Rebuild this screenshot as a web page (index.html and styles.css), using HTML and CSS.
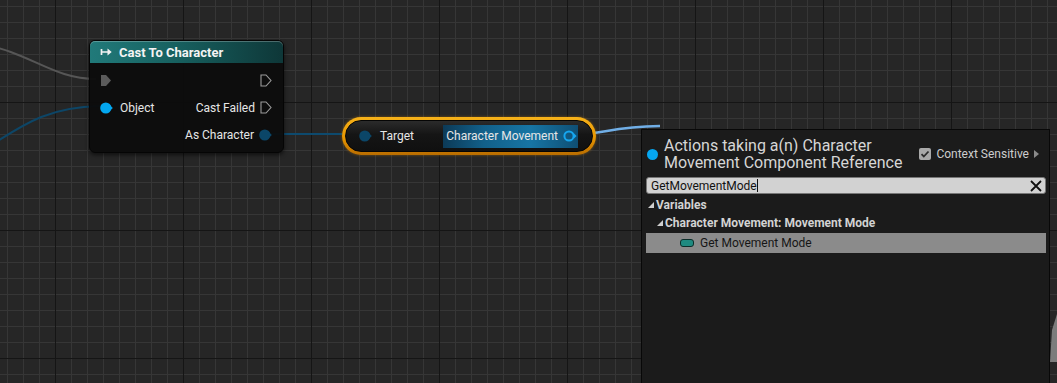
FILE: index.html
```html
<!DOCTYPE html>
<html lang="en">

<head>
    <meta charset="UTF-8">
    <meta name="viewport" content="width=device-width, initial-scale=1.0">
    <title>Blueprint Graph</title>
    <link rel="stylesheet" href="styles.css">
</head>

<body>
    <div class="graph">
        <!-- wires sit under the nodes -->
        <svg class="wires" width="1057" height="383" viewBox="0 0 1057 383">
            <path d="M-20 44 C 30 52, 52 79, 96 79" stroke="#565656" stroke-width="2" fill="none" />
            <path d="M-10 146 C 28 121, 52 107, 100 106" stroke="#0d4667" stroke-width="2" fill="none" />
            <path d="M268 134 L 360 134" stroke="#0d4a6e" stroke-width="2" fill="none" />
            <path d="M578 134 C 602 134, 612 127, 660 126" stroke="#70aee6" stroke-width="2.5" fill="none" />
            <path d="M1057 314 L 1052 330 L 1050 362 L 1057 362 Z" fill="#7c7c7c" />
        </svg>

        <div class="node cast-node">
            <div class="node-header">
                <svg class="cast-icon" width="13" height="12" viewBox="0 0 13 12">
                    <path d="M1.5 3v6 M1.5 6h7" stroke="#f2f2f2" stroke-width="1.7" fill="none" />
                    <path d="M7.5 2.6l4.2 3.4-4.2 3.4z" fill="#f2f2f2" />
                </svg>
                <span>Cast To Character</span>
            </div>
            <div class="node-body">
                <div class="pin pin-in">
                    <svg width="12" height="13" viewBox="0 0 12 13"><path d="M1 1h5l5 5.5-5 5.5H1z" fill="#5b5b5b" /></svg>
                </div>
                <div class="pin pin-out">
                    <svg width="12" height="13" viewBox="0 0 12 13"><path d="M1 1h5l5 5.5-5 5.5H1z" fill="none" stroke="#9c9c9c" stroke-width="1.1" /></svg>
                </div>
                <div class="pin pin-in">
                    <svg width="13" height="12" viewBox="0 0 13 12"><circle cx="5.8" cy="6" r="5.6" fill="#03a7f0" /><path d="M10 3.2l2.8 2.8-2.8 2.8z" fill="#03a7f0" /></svg>
                    <span>Object</span>
                </div>
                <div class="pin pin-out">
                    <span>Cast Failed</span>
                    <svg width="12" height="13" viewBox="0 0 12 13"><path d="M1 1h5l5 5.5-5 5.5H1z" fill="none" stroke="#9c9c9c" stroke-width="1.1" /></svg>
                </div>
                <div class="pin pin-in"></div>
                <div class="pin pin-out">
                    <span>As Character</span>
                    <svg width="13" height="12" viewBox="0 0 13 12"><circle cx="5.8" cy="6" r="5.6" fill="#0b4668" /><path d="M10 3.2l2.8 2.8-2.8 2.8z" fill="#0b4668" /></svg>
                </div>
            </div>
        </div>

        <div class="node getter-node">
            <div class="getter-inner">
                <svg width="13" height="12" viewBox="0 0 13 12"><circle cx="5.8" cy="6" r="5.6" fill="#0b4668" /><path d="M10 3.2l2.8 2.8-2.8 2.8z" fill="#0b4668" /></svg>
                <span class="getter-target">Target</span>
                <div class="getter-out">
                    <span>Character Movement</span>
                    <svg width="14" height="12" viewBox="0 0 14 12"><circle cx="6" cy="6" r="4.6" fill="none" stroke="#16a6ef" stroke-width="2" /><path d="M11 3.4l2.6 2.6-2.6 2.6z" fill="#16a6ef" /></svg>
                </div>
            </div>
        </div>

        <div class="menu">
            <div class="menu-header">
                <span class="type-dot"></span>
                <div class="menu-title">Actions taking a(n) Character<br>Movement Component Reference</div>
                <div class="context">
                    <span class="checkbox">
                        <svg width="10" height="10" viewBox="0 0 10 10"><path d="M1.5 5.2l2.3 2.3 4.7-5" stroke="#2b2b2b" stroke-width="1.8" fill="none" /></svg>
                    </span>
                    <span>Context Sensitive</span>
                    <span class="context-arrow"></span>
                </div>
            </div>
            <div class="search">
                <span class="search-text">GetMovementMode</span><span class="caret"></span>
                <svg class="clear" width="12" height="12" viewBox="0 0 12 12"><path d="M1 1l10 10 M11 1L1 11" stroke="#111" stroke-width="1.8" /></svg>
            </div>
            <div class="tree">
                <div class="tree-row category"><span class="tri"></span>Variables</div>
                <div class="tree-row category sub"><span class="tri"></span>Character Movement: Movement Mode</div>
                <div class="tree-row action selected"><span class="var-icon"></span>Get Movement Mode</div>
            </div>
        </div>
    </div>
</body>

</html>
```

FILE: styles.css
```css
html,
body {
    margin: 0;
    height: 100%;
}

body {
    font-family: Roboto, "Liberation Sans", sans-serif;
    font-size: 12px;
    color: #e6e6e6;
    overflow: hidden;
}

/* grid: minor lines every 16px, major every 128px */
.graph {
    position: relative;
    width: 100vw;
    height: 100vh;
    overflow: hidden;
    background-color: #262626;
    background-image:
        linear-gradient(90deg, #151515 1px, transparent 1px),
        linear-gradient(180deg, #151515 1px, transparent 1px),
        linear-gradient(90deg, #363636 1px, transparent 1px),
        linear-gradient(180deg, #363636 1px, transparent 1px);
    background-size: 128px 128px, 128px 128px, 16px 16px, 16px 16px;
    background-position: 55px 0, 0 102px, 7px 0, 0 6px;
}

.wires {
    position: absolute;
    top: 0;
    left: 0;
}

.node {
    position: absolute;
}

/* Cast To Character */
.cast-node {
    left: 89px;
    top: 40px;
    width: 195px;
    border-radius: 6px;
    background: rgba(12, 12, 12, 0.95);
    border: 1px solid #050505;
    box-shadow: 0 2px 4px rgba(0, 0, 0, 0.6);
    box-sizing: border-box;
}

.node-header {
    display: flex;
    align-items: center;
    gap: 6px;
    height: 22px;
    padding: 0 10px;
    border-radius: 5px 5px 0 0;
    background: linear-gradient(90deg, #217a7a 0%, #17605f 45%, #0e3738 100%);
    box-shadow: inset 0 1px 0 rgba(255, 255, 255, 0.25);
    font-size: 13px;
    font-weight: 700;
    color: #f4f4f4;
}

.node-body {
    display: grid;
    grid-template-columns: 1fr auto;
    grid-auto-rows: 27px;
    padding: 4px 11px 4px 10px;
}

.pin {
    display: flex;
    align-items: center;
    gap: 7px;
}

.pin-out {
    justify-content: flex-end;
    gap: 5px;
}

.pin svg {
    display: block;
}

/* Character Movement getter */
.getter-node {
    left: 342px;
    top: 117px;
    width: 254px;
    height: 38px;
    box-sizing: border-box;
    padding: 3px;
    border-radius: 19px;
    background: linear-gradient(180deg, #f7b21a, #e79600 55%, #b86c00);
    box-shadow: 0 0 3px rgba(255, 160, 0, 0.4);
}

.getter-inner {
    display: flex;
    align-items: center;
    height: 100%;
    box-sizing: border-box;
    padding: 0 0 0 13px;
    border: 1px solid #050505;
    border-radius: 16px;
    background: linear-gradient(180deg, #2b2b2b, #151515 45%, #101010);
}

.getter-target {
    margin-left: 8px;
}

.getter-out {
    display: flex;
    align-items: center;
    gap: 5px;
    margin-left: auto;
    margin-right: 14px;
    height: 23px;
    padding: 0 1px 0 3px;
    background: linear-gradient(90deg, #0c3a57 0%, #12608a 30%, #1775a4 65%, #0f4f74 100%);
}

/* action menu */
.menu {
    position: absolute;
    left: 641px;
    top: 129px;
    width: 409px;
    height: 260px;
    box-sizing: border-box;
    background: #1b1b1b;
    border: 1px solid #080808;
    padding: 2px 4px 0 3px;
}

.menu-header {
    display: flex;
    align-items: center;
    height: 44px;
}

.type-dot {
    width: 11px;
    height: 11px;
    border-radius: 50%;
    background: #05a6f0;
    margin: 0 6px 0 2px;
    flex: none;
}

.menu-title {
    font-size: 16px;
    line-height: 17px;
    color: #d6d6d6;
}

.context {
    display: flex;
    align-items: center;
    gap: 5px;
    margin-left: auto;
    margin-right: 6px;
    color: #cdcdcd;
}

.checkbox {
    display: flex;
    align-items: center;
    justify-content: center;
    width: 12px;
    height: 12px;
    border-radius: 2px;
    background: #a9a9a9;
}

.context-arrow {
    width: 0;
    height: 0;
    border-left: 5px solid #8a8a8a;
    border-top: 4px solid transparent;
    border-bottom: 4px solid transparent;
}

.search {
    display: flex;
    align-items: center;
    height: 17px;
    margin: 1px 0 0 1px;
    width: 400px;
    box-sizing: border-box;
    padding: 0 3px 0 4px;
    background: #d2d2d2;
    border: 1px solid #777;
    border-radius: 3px;
    color: #111;
}

.caret {
    width: 1px;
    height: 13px;
    background: #111;
}

.clear {
    margin-left: auto;
}

.tree {
    margin-top: 2px;
    width: 400px;
    margin-left: 1px;
}

.tree-row {
    display: flex;
    align-items: center;
    height: 18px;
}

.category {
    font-weight: 700;
    color: #d2d2d2;
    padding-left: 2px;
}

.category.sub {
    padding-left: 11px;
}

.tri {
    width: 0;
    height: 0;
    border-bottom: 6px solid #cfcfcf;
    border-left: 6px solid transparent;
    margin-right: 2px;
}

.action {
    height: 20px;
    margin-top: 1px;
    padding-left: 34px;
    color: #161616;
}

.selected {
    background: #8b8b8b;
}

.var-icon {
    width: 12px;
    height: 6px;
    border-radius: 3px;
    background: #1e8a80;
    border: 1px solid #0c2e2a;
    margin-right: 6px;
}
```
